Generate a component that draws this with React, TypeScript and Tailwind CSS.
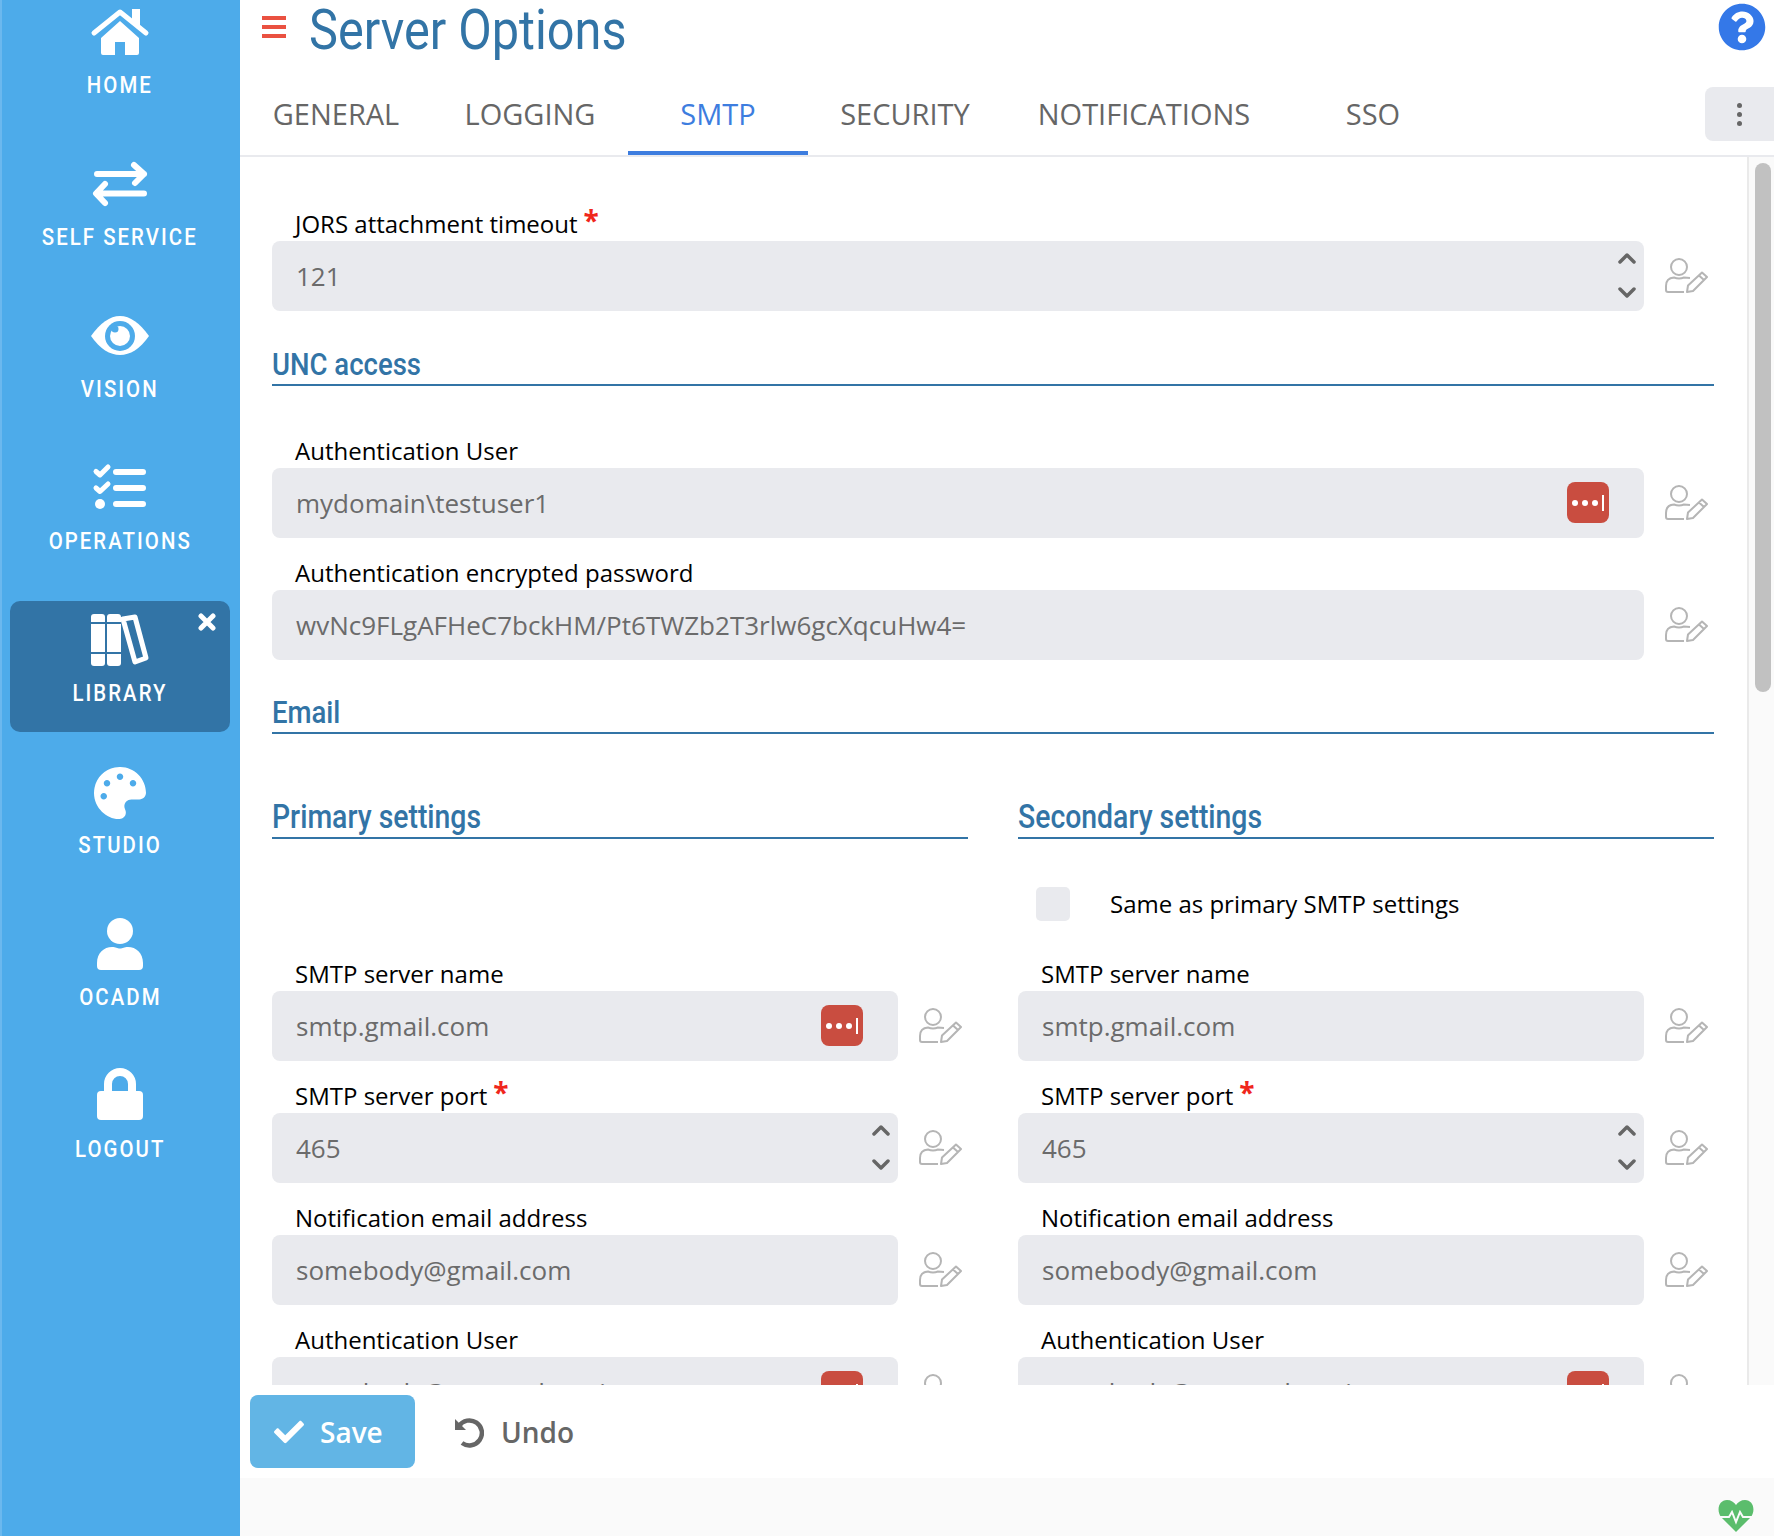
import type { ReactNode } from "react";
import { FaCheck, FaPalette, FaQuestionCircle } from "react-icons/fa";

// no condensed face is installed, so squeeze Roboto horizontally
const narrow = "font-['Roboto',sans-serif]";

function NavBox({ children }: { children: ReactNode }) {
  return (
    <svg width="64" height="60" viewBox="0 0 64 60" fill="none">
      {children}
    </svg>
  );
}

const navItems: { label: string; active?: boolean; icon: ReactNode }[] = [
  {
    label: "HOME",
    icon: (
      <NavBox>
        <rect x="44" y="8" width="8" height="16" fill="white" />
        <path d="M13 37 L32 20 L51 37 V52 Q51 54 49 54 H37 V41 H27 V54 H15 Q13 54 13 52 Z" fill="white" />
        <path d="M6 32 L32 11 L58 32" stroke="white" strokeWidth="5" strokeLinecap="round" strokeLinejoin="round" />
      </NavBox>
    ),
  },
  {
    label: "SELF SERVICE",
    icon: (
      <NavBox>
        <path d="M9 21 H56 M46 12 L56 21 L47 30 M56 40.5 H9 M17 31 L8 40.5 L17 50" stroke="white" strokeWidth="6" strokeLinecap="round" strokeLinejoin="round" />
      </NavBox>
    ),
  },
  {
    label: "VISION",
    icon: (
      <NavBox>
        <path d="M3 31 C12 18 22 11 32 11 C42 11 52 18 61 31 C52 44 42 50 32 50 C22 50 12 44 3 31 Z" fill="white" />
        <circle cx="32" cy="31" r="15" fill="#4dabea" />
        <circle cx="32" cy="31" r="10" fill="white" />
        <circle cx="27" cy="24" r="3.5" fill="#4dabea" />
      </NavBox>
    ),
  },
  {
    label: "OPERATIONS",
    icon: (
      <NavBox>
        <path d="M8 14.5 L12 18 L20 10 M8 31 L12 34.5 L20 27" stroke="white" strokeWidth="5" strokeLinecap="round" strokeLinejoin="round" />
        <circle cx="12" cy="47" r="5" fill="white" />
        <path d="M28 15 H55 M28 31 H55 M28 47 H55" stroke="white" strokeWidth="6" strokeLinecap="round" />
      </NavBox>
    ),
  },
  {
    label: "LIBRARY",
    active: true,
    icon: (
      <NavBox>
        <rect x="3" y="5" width="14" height="52" rx="3" fill="white" />
        <rect x="19" y="5" width="14" height="52" rx="3" fill="white" />
        <path d="M3 14 H33 M3 44 H33" stroke="#3274a6" strokeWidth="2" />
        <path d="M35 10 L47 8 L58 49 L47 53 Z" stroke="white" strokeWidth="5" strokeLinejoin="round" />
      </NavBox>
    ),
  },
  {
    label: "STUDIO",
    icon: (
      <div className="flex h-[60px] w-[64px] items-center justify-center pt-[4px]">
        <FaPalette size={52} color="white" />
      </div>
    ),
  },
  {
    label: "OCADM",
    icon: (
      <NavBox>
        <circle cx="32" cy="18" r="13" fill="white" />
        <path d="M9 50 C9 40 16 34 24 34 C28 34 29 35.5 32 35.5 C35 35.5 36 34 40 34 C48 34 55 40 55 50 V53 Q55 57 51 57 H13 Q9 57 9 53 Z" fill="white" />
      </NavBox>
    ),
  },
  {
    label: "LOGOUT",
    icon: (
      <NavBox>
        <path d="M20 28 V19 A12 12 0 0 1 44 19 V28" stroke="white" strokeWidth="8" />
        <rect x="9" y="26" width="46" height="29" rx="4" fill="white" />
      </NavBox>
    ),
  },
];

function Sidebar() {
  return (
    <aside className="h-full w-[240px] shrink-0 overflow-hidden border-l-2 border-[#6bb8ee] bg-[#4dabea]">
      <div className="mt-[-7px] flex flex-col gap-[21px] pl-[8px] pr-[10px]">
        {navItems.map((item) => (
          <div
            key={item.label}
            className={`relative flex h-[131px] flex-col items-center rounded-[10px] pt-[8px] ${item.active ? "bg-[#3274a6]" : ""}`}
          >
            {item.icon}
            <div className={`mt-[10px] scale-x-[0.85] whitespace-nowrap text-[24px] font-medium leading-[28px] tracking-[2.4px] text-white ${narrow}`}>{item.label}</div>
            {item.active && (
              <svg className="absolute right-[14px] top-[12px]" width="18" height="18" viewBox="0 0 18 18">
                <path d="M3 3 L15 15 M15 3 L3 15" stroke="white" strokeWidth="5" strokeLinecap="round" />
              </svg>
            )}
          </div>
        ))}
      </div>
    </aside>
  );
}

const tabs = [
  { label: "GENERAL", w: "w-[192px]" },
  { label: "LOGGING", w: "w-[196px]" },
  { label: "SMTP", w: "w-[180px]", active: true },
  { label: "SECURITY", w: "w-[194px]" },
  { label: "NOTIFICATIONS", w: "w-[284px]" },
  { label: "SSO", w: "w-[174px]" },
];

function Tabs() {
  return (
    <div className="flex h-[70px] border-b-2 border-[#e9eaee]">
      {tabs.map((t) => (
        <div
          key={t.label}
          className={`${t.w} h-[68px] pt-[10px] text-center text-[29px] leading-[34px] ${t.active ? "border-b-4 border-[#3d7ddf] text-[#3d7ddf]" : "text-[#666666]"}`}
        >
          {t.label}
        </div>
      ))}
      <div className="ml-auto flex h-[54px] w-[69px] flex-col items-center justify-center gap-[4px] rounded-l-[8px] bg-[#e9eaee]">
        <span className="h-[5px] w-[5px] rounded-full bg-[#666666]" />
        <span className="h-[5px] w-[5px] rounded-full bg-[#666666]" />
        <span className="h-[5px] w-[5px] rounded-full bg-[#666666]" />
      </div>
    </div>
  );
}

function UserPen() {
  return (
    <svg width="44" height="36" viewBox="0 0 44 36" fill="none" stroke="#b5b5b5" strokeWidth="2">
      <circle cx="15" cy="10" r="8" />
      <path d="M20 35 H4 Q2 35 2 33 V29 Q2 21 10 20.5 Q15 22.5 20 20.5 L26 21" />
      <path d="M24 28.5 L38 15.5 L43 20 L29 34 L23 35 Z M35 18.5 L40 23" strokeLinejoin="round" />
    </svg>
  );
}

function PassButton() {
  return (
    <div className="absolute right-[35px] top-[14px] flex h-[41px] w-[42px] items-center justify-center gap-[4px] rounded-[8px] bg-[#c94d40]">
      <span className="h-[6px] w-[6px] rounded-full bg-white" />
      <span className="h-[6px] w-[6px] rounded-full bg-white" />
      <span className="h-[6px] w-[6px] rounded-full bg-white" />
      <span className="h-[16px] w-[2px] bg-white" />
    </div>
  );
}

function Spinner() {
  return (
    <svg className="absolute right-[8px] top-[7px]" width="18" height="56" viewBox="0 0 18 56" fill="none" stroke="#666666" strokeWidth="3.5" strokeLinecap="round" strokeLinejoin="round">
      <path d="M2 14 L9 7 L16 14 M2 41 L9 48 L16 41" />
    </svg>
  );
}

type FieldProps = { label: string; value: string; required?: boolean; spin?: boolean; pass?: boolean };

function Field({ label, value, required, spin, pass }: FieldProps) {
  return (
    <div>
      <div className="mt-[18px] flex h-[34px] items-center pl-[23px] text-[24px] leading-[34px] text-black">
        {label}
        {required && <span className="ml-[6px] mt-[-8px] text-[28px] font-bold leading-[30px] text-[#f0261c]">*</span>}
      </div>
      <div className="flex items-center">
        <div className="relative min-w-0 flex-1">
          <input
            readOnly
            value={value}
            className="h-[70px] w-full rounded-[8px] bg-[#e9eaee] pl-[24px] text-[26px] text-[#6b6b6b] outline-none"
          />
          {spin && <Spinner />}
          {pass && <PassButton />}
        </div>
        <div className="flex w-[70px] justify-end pb-[3px] pr-[6px]">
          <UserPen />
        </div>
      </div>
    </div>
  );
}

function SectionTitle({ children, className }: { children: ReactNode; className: string }) {
  return (
    <div className={`flex items-end border-b-2 border-[#3274a6] font-medium text-[#3274a6] ${narrow} ${className}`}>
      <span className="origin-left scale-x-[0.86] whitespace-nowrap">{children}</span>
    </div>
  );
}

function SmtpColumn({ title, secondary }: { title: string; secondary?: boolean }) {
  return (
    <div>
      <SectionTitle className="h-[45px] text-[33px] leading-[40px]">{title}</SectionTitle>
      <div className="flex h-[100px] items-start pl-[18px] pt-[48px] text-[24px] leading-[34px] text-black">
        {secondary && (
          <>
            <span className="h-[34px] w-[34px] rounded-[5px] bg-[#e9eaee]" />
            <span className="ml-[40px]">Same as primary SMTP settings</span>
          </>
        )}
      </div>
      <Field label="SMTP server name" value="smtp.gmail.com" pass={!secondary} />
      <Field label="SMTP server port" value="465" required spin />
      <Field label="Notification email address" value="somebody@gmail.com" />
      <Field label="Authentication User" value="somebody@mytestdomain" pass />
    </div>
  );
}

export default function App() {
  return (
    <div className="flex h-[1536px] w-[1774px] overflow-hidden bg-white font-['Open_Sans',sans-serif]">
      <Sidebar />
      <main className="flex min-w-0 flex-1 flex-col">
        <header className="relative flex h-[87px] shrink-0 items-start">
          <div className="ml-[22px] mt-[16px] flex w-[24px] flex-col gap-[5px]">
            <span className="h-[4px] bg-[#ea5141]" />
            <span className="h-[4px] bg-[#ea5141]" />
            <span className="h-[4px] bg-[#ea5141]" />
          </div>
          <h1 className={`ml-[23px] mt-[2px] origin-left scale-x-[0.885] whitespace-nowrap text-[55px] leading-[56px] text-[#3274a6] ${narrow}`}>Server Options</h1>
          <FaQuestionCircle className="absolute right-[8px] top-[3px]" size={48} color="#3478e8" />
        </header>
        <Tabs />

        <div className="flex min-h-0 flex-1">
          <div className="min-w-0 flex-1 overflow-hidden pl-[32px] pr-[33px] pt-[32px]">
            <Field label="JORS attachment timeout" value="121" required spin />
            <SectionTitle className="h-[75px] text-[32px] leading-[40px]">UNC access</SectionTitle>
            <div className="mt-[48px]">
              <Field label="Authentication User" value="mydomain\testuser1" pass />
              <Field label="Authentication encrypted password" value="wvNc9FLgAFHeC7bckHM/Pt6TWZb2T3rlw6gcXqcuHw4=" />
            </div>
            <SectionTitle className="h-[74px] text-[32px] leading-[40px]">Email</SectionTitle>
            <div className="mt-[60px] grid grid-cols-2 gap-[50px]">
              <SmtpColumn title="Primary settings" />
              <SmtpColumn title="Secondary settings" secondary />
            </div>
          </div>
          <div className="w-[27px] shrink-0 border-l-2 border-[#eaeaea] bg-[#fafafa] pl-[6px] pt-[6px]">
            <div className="h-[529px] w-[16px] rounded-full bg-[#c1c1c1]" />
          </div>
        </div>

        <div className="flex h-[93px] shrink-0 items-start bg-white pl-[10px] pt-[10px]">
          <button className="flex h-[73px] w-[165px] items-center rounded-[8px] bg-[#62b5e5] pl-[24px] text-[28px] font-semibold text-white">
            <FaCheck size={30} />
            <span className="ml-[16px]">Save</span>
          </button>
          <button className="ml-[37px] flex h-[73px] items-center text-[28px] font-semibold text-[#666666]">
            <svg width="32" height="32" viewBox="0 0 32 32" fill="none" stroke="#666666" strokeWidth="4.5">
              <path d="M7 10 A12.5 12.5 0 1 1 10 27" />
              <path d="M3 3 V14 H14 Z" fill="#666666" stroke="none" />
            </svg>
            <span className="ml-[17px]">Undo</span>
          </button>
        </div>

        <footer className="flex h-[58px] shrink-0 items-end justify-end bg-[#fafafa] pb-[4px] pr-[20px]">
          <svg width="36" height="32" viewBox="0 0 36 32">
            <path d="M18 32 L3 17 C-2 10 1 0 9 0 C13 0 16 2 18 5 C20 2 23 0 27 0 C35 0 38 10 33 17 Z" fill="#5bbd6c" />
            <path d="M0 17 H11 L14 12 L18 22 L22 12 L25 17 H36" fill="none" stroke="#fafafa" strokeWidth="2" />
          </svg>
        </footer>
      </main>
    </div>
  );
}
